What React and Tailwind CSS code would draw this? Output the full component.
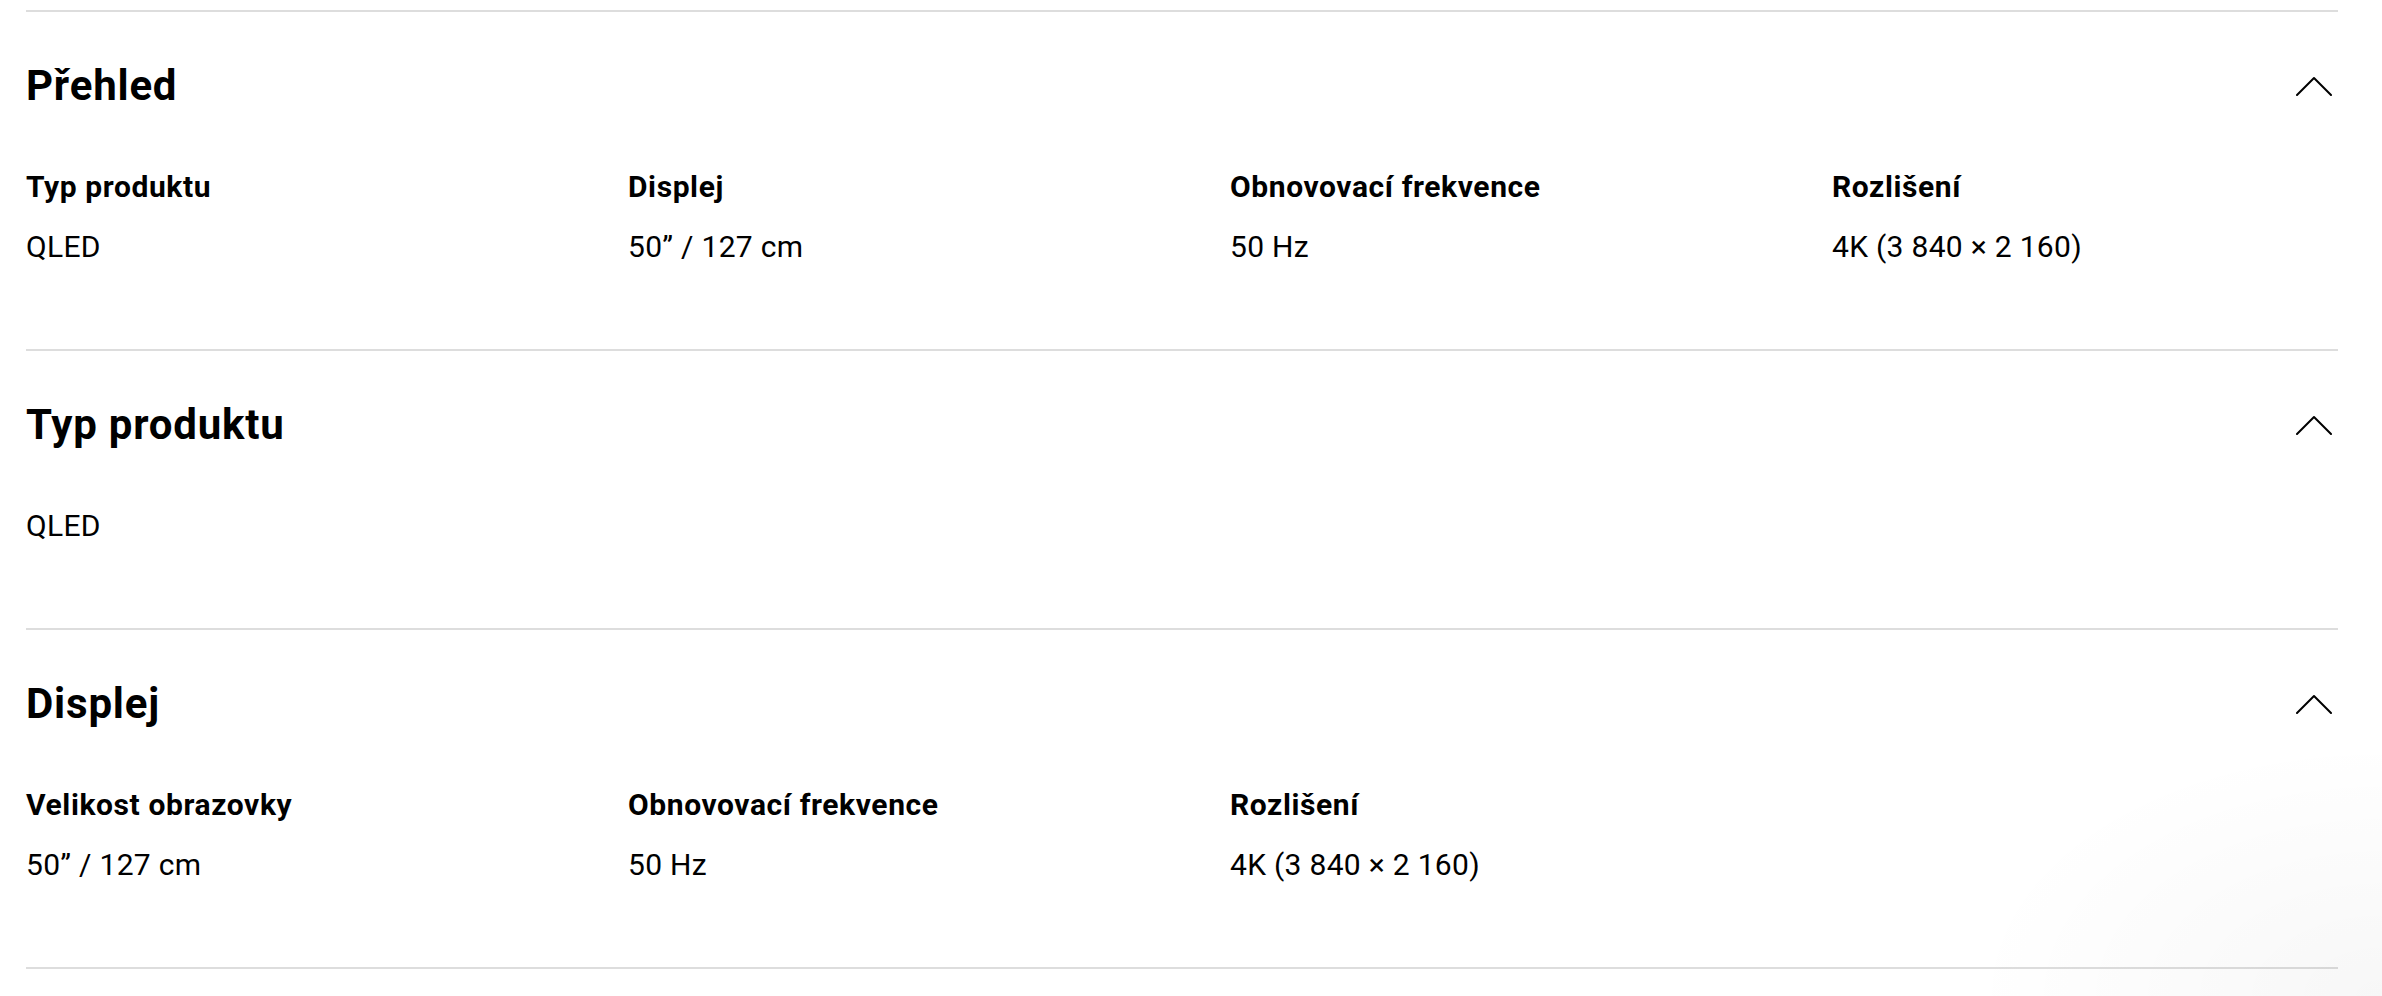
import React from 'react';

const sections = [
  {
    title: 'Přehled',
    items: [
      { label: 'Typ produktu', value: 'QLED' },
      { label: 'Displej', value: '50” / 127 cm' },
      { label: 'Obnovovací frekvence', value: '50 Hz' },
      { label: 'Rozlišení', value: '4K (3 840 × 2 160)' },
    ],
  },
  {
    title: 'Typ produktu',
    items: [{ label: null, value: 'QLED' }],
  },
  {
    title: 'Displej',
    items: [
      { label: 'Velikost obrazovky', value: '50” / 127 cm' },
      { label: 'Obnovovací frekvence', value: '50 Hz' },
      { label: 'Rozlišení', value: '4K (3 840 × 2 160)' },
    ],
  },
];

function ChevronUp() {
  return (
    <svg width="36" height="20" viewBox="0 0 36 20" fill="none" className="mr-[6px] shrink-0">
      <polyline points="1,19 18,2 35,19" stroke="#000" strokeWidth="2" strokeLinecap="round" strokeLinejoin="round" />
    </svg>
  );
}

function SpecSection({ title, items }) {
  return (
    <section className="border-t-2 border-[#dddddd] pt-[50px] pb-[84px]">
      {/* header row */}
      <div className="flex items-center justify-between">
        <h2 className="text-[42px] leading-[48px] font-bold tracking-[0.8px] text-black">{title}</h2>
        <ChevronUp />
      </div>

      <div className="mt-[59px] grid grid-cols-4 gap-x-[96px]">
        {items.map((item, i) => (
          <div key={i} className="flex flex-col">
            {item.label && (
              <p className="text-[30px] leading-[36px] font-bold tracking-[0.6px] text-black">{item.label}</p>
            )}
            <p className={`text-[30px] leading-[36px] font-normal tracking-[0.3px] text-black ${item.label ? 'mt-6' : ''}`}>
              {item.value}
            </p>
          </div>
        ))}
      </div>
    </section>
  );
}

export default function App() {
  return (
    <div className="relative min-h-screen overflow-hidden bg-white pl-[26px] pr-[44px] pt-[10px] font-['Roboto','Liberation_Sans',sans-serif]">
      <div className="border-b-2 border-[#dddddd]">
        {sections.map((s) => (
          <SpecSection key={s.title} title={s.title} items={s.items} />
        ))}
      </div>
      {/* faint shadow in the bottom right corner */}
      <div className="pointer-events-none absolute right-0 bottom-0 h-[260px] w-[420px] bg-[radial-gradient(ellipse_at_bottom_right,rgba(0,0,0,0.03),transparent_70%)]" />
    </div>
  );
}
